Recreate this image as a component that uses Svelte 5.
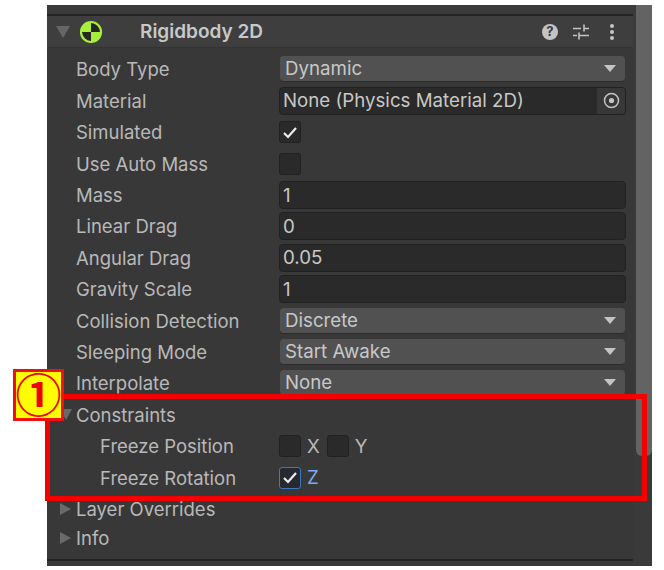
<script>
  const rowsTop = [
    { label: 'Body Type', kind: 'select', value: 'Dynamic' },
    { label: 'Material', kind: 'object', value: 'None (Physics Material 2D)' },
    { label: 'Simulated', kind: 'check', on: true },
    { label: 'Use Auto Mass', kind: 'check', on: false },
    { label: 'Mass', kind: 'input', value: '1' },
    { label: 'Linear Drag', kind: 'input', value: '0' },
    { label: 'Angular Drag', kind: 'input', value: '0.05' },
    { label: 'Gravity Scale', kind: 'input', value: '1' },
    { label: 'Collision Detection', kind: 'select', value: 'Discrete' },
    { label: 'Sleeping Mode', kind: 'select', value: 'Start Awake' },
    { label: 'Interpolate', kind: 'select', value: 'None' }
  ];
</script>

<div class="page">
  <div class="panel">
    <div class="content">
      <div class="topstrip"></div>
      <header class="head">
        <svg class="fold" width="14" height="12" viewBox="0 0 14 12"><path d="M0 0h14L7 12z" fill="#666"/></svg>
        <svg class="logo" width="24" height="24" viewBox="0 0 24 24">
          <path d="M12 12V2A10 10 0 0 0 2 12zM12 12v10a10 10 0 0 0 10-10z" fill="#a6f03c"/>
          <path d="M12 12V2a10 10 0 0 1 10 10zM12 12v10A10 10 0 0 1 2 12z" fill="#262626"/>
          <circle cx="12" cy="12" r="10" fill="none" stroke="#a6f03c" stroke-width="2.2"/>
        </svg>
        <span class="title">Rigidbody 2D</span>
        <div class="tools">
          <svg width="16" height="16" viewBox="0 0 16 16"><circle cx="8" cy="8" r="8" fill="#c4c4c4"/><text x="8" y="12.4" text-anchor="middle" class="q">?</text></svg>
          <svg class="sliders" width="16" height="16" viewBox="0 0 16 16" fill="none" stroke="#c4c4c4" stroke-width="1.6"><path d="M0 4.5h8M11 .5v7M11 4.5h5M0 11.5h4M6 8.5v7M6 11.5h10"/></svg>
          <svg class="dots" width="6" height="16" viewBox="0 0 6 16" fill="#c4c4c4"><circle cx="3" cy="2" r="2"/><circle cx="3" cy="8" r="2"/><circle cx="3" cy="14" r="2"/></svg>
        </div>
      </header>

      <div class="rows">
        {#each rowsTop as r}
          <div class="row">
            <span class="label">{r.label}</span>
            {#if r.kind === 'select'}
              <div class="select"><span>{r.value}</span><i class="caret"></i></div>
            {:else if r.kind === 'object'}
              <div class="field object">
                <span>{r.value}</span>
                <div class="target">
                  <svg width="17" height="17" viewBox="0 0 17 17"><circle cx="8.5" cy="8.5" r="7" fill="none" stroke="#c4c4c4" stroke-width="1.5"/><circle cx="8.5" cy="8.5" r="2.6" fill="#c4c4c4"/></svg>
                </div>
              </div>
            {:else if r.kind === 'input'}
              <div class="field"><span>{r.value}</span></div>
            {:else}
              <div class="check">
                {#if r.on}<svg width="16" height="13" viewBox="0 0 16 13"><path d="M2 7l4 4 8-9" fill="none" stroke="#eee" stroke-width="2.2"/></svg>{/if}
              </div>
            {/if}
          </div>
        {/each}

        <div class="row">
          <span class="label foldlabel"><i class="tri down"></i>Constraints</span>
        </div>
        <div class="row">
          <span class="label sub">Freeze Position</span>
          <div class="checks">
            <div class="check"></div><span class="axis">X</span>
            <div class="check"></div><span class="axis">Y</span>
          </div>
        </div>
        <div class="row">
          <span class="label sub">Freeze Rotation</span>
          <div class="checks">
            <div class="check focus"><svg width="16" height="13" viewBox="0 0 16 13"><path d="M2 7l4 4 8-9" fill="none" stroke="#eee" stroke-width="2.2"/></svg></div>
            <span class="axis blue">Z</span>
          </div>
        </div>
        <div class="row">
          <span class="label foldlabel"><i class="tri right"></i>Layer Overrides</span>
        </div>
        <div class="row short">
          <span class="label foldlabel"><i class="tri right"></i>Info</span>
        </div>
      </div>
      <div class="bottomline"></div>
    </div>
    <div class="scroll"><div class="thumb"></div></div>
  </div>

  <div class="redbox"></div>
  <div class="badge">①</div>
</div>

<style>
  :global(body) { margin: 0; background: #fff; }
  .page {
    position: relative;
    width: 664px;
    height: 570px;
    overflow: hidden;
    font-family: Inter, "Noto Sans CJK JP", sans-serif;
    font-size: 18.7px;
    color: #c2c2c2;
  }
  .panel {
    position: absolute;
    left: 47px;
    top: 5px;
    width: 605px;
    height: 561px;
    display: flex;
    background: #383838;
  }
  .content { flex: 1; min-width: 0; display: flex; flex-direction: column; }
  .topstrip { height: 9px; background: #3a3a3a; border-bottom: 2px solid #232323; flex: none; }
  .head {
    display: flex;
    align-items: center;
    height: 31px;
    flex: none;
    background: #3e3e3e;
    border-bottom: 1px solid #343434;
    padding: 0 18px 0 9px;
  }
  .fold { margin-right: 9px; }
  .logo { margin-right: 37px; }
  .title { font-weight: 600; color: #c8c8c8; font-size: 19px; }
  .tools { margin-left: auto; display: flex; align-items: center; }
  .sliders { margin-left: 15px; }
  .dots { margin-left: 20px; }
  .q { font: 700 13px Inter, sans-serif; fill: #3a3a3a; }
  .rows { padding-top: 5.8px; flex: 1; }
  .row { display: flex; align-items: center; height: 31.4px; }
  .row.short { height: 26px; }
  .label { width: 203px; padding-left: 29px; box-sizing: content-box; flex: none; white-space: nowrap; color: #b9b9b9; font-size: 18.5px; }
  .label.sub { width: 179px; padding-left: 53px; }
  .foldlabel { display: flex; align-items: center; }
  .tri { display: block; position: absolute; margin-left: -16px; }
  .tri.down { border-left: 6px solid transparent; border-right: 6px solid transparent; border-top: 11px solid #6a6a6a; }
  .tri.right { border-top: 6px solid transparent; border-bottom: 6px solid transparent; border-left: 11px solid #6a6a6a; }
  .select {
    flex: none;
    width: 345px;
    height: 26px;
    box-sizing: border-box;
    margin-left: 1px;
    background: #515151;
    border-radius: 4px;
    border-bottom: 1px solid #2c2c2c;
    display: flex;
    align-items: center;
    justify-content: space-between;
    padding: 0 9px 0 5px;
    color: #c8c8c8;
  }
  .caret { width: 0; height: 0; border-left: 6px solid transparent; border-right: 6px solid transparent; border-top: 7px solid #c4c4c4; }
  .field {
    flex: none;
    width: 347px;
    height: 28px;
    box-sizing: border-box;
    background: #2a2a2a;
    border: 1px solid #212121;
    border-radius: 4px;
    display: flex;
    align-items: center;
    padding-left: 3px;
    color: #c8c8c8;
  }
  .object { justify-content: space-between; padding-right: 0; overflow: hidden; }
  .target { width: 28px; height: 100%; background: #383838; display: flex; align-items: center; justify-content: center; }
  .check {
    flex: none;
    width: 22px;
    height: 22px;
    box-sizing: border-box;
    background: #2a2a2a;
    border: 1px solid #212121;
    border-radius: 3px;
    display: flex;
    align-items: center;
    justify-content: center;
  }
  .check.focus { border: 1.5px solid #3a79bb; background: #262a30; }
  .checks { display: flex; align-items: center; }
  .axis { margin: 0 7px 0 6px; color: #b9b9b9; }
  .axis.blue { color: #7baaf0; }
  .bottomline { height: 2px; background: #232323; margin-bottom: 5px; flex: none; }
  .scroll { width: 19px; flex: none; background: #3a3a3a; padding-left: 3px; box-sizing: border-box; }
  .thumb { width: 16px; height: 451px; background: #636363; border-radius: 0 0 6px 6px; }
  .redbox {
    position: absolute;
    left: 45px;
    top: 394px;
    width: 602px;
    height: 107px;
    box-sizing: border-box;
    border: 5px solid #f50000;
  }
  .badge {
    position: absolute;
    left: 13px;
    top: 369px;
    width: 51px;
    height: 52px;
    box-sizing: border-box;
    background: #ffff00;
    border: 3px solid #f01010;
    color: #f00000;
    font: 700 46px/46px "Noto Sans CJK JP", sans-serif;
    padding-bottom: 6px;
    display: flex;
    justify-content: center;
    align-items: center;
  }
</style>
